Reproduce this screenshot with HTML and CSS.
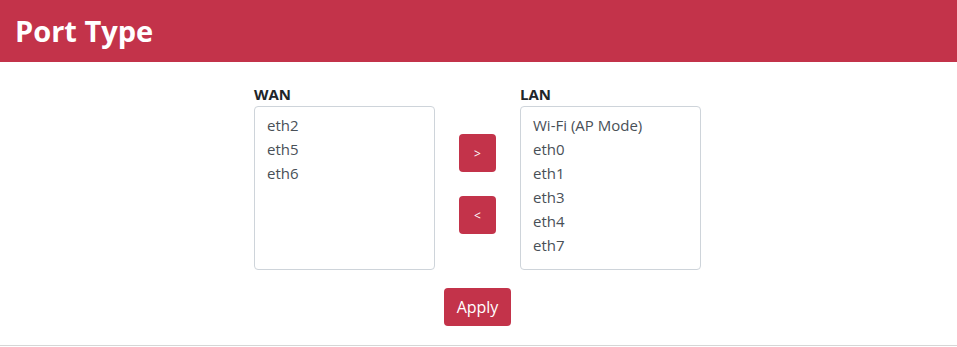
FILE: index.html
```html
<!DOCTYPE html>
<html>
<head>
  <meta charset="UTF-8">
  <link rel="stylesheet" href="styles.css">
</head>
<body>
  <div class="header">
    <h1>Port Type</h1>
  </div>

  <div class="content">
    <div class="port-row">
      <div class="port-group">
        <label for="wanList">WAN</label>
        <select id="wanList" class="port-list" multiple>
          <option>eth2</option>
          <option>eth5</option>
          <option>eth6</option>
        </select>
      </div>

      <div class="move-buttons">
        <button class="move-btn" id="toLan">&gt;</button>
        <button class="move-btn" id="toWan">&lt;</button>
      </div>

      <div class="port-group">
        <label for="lanList">LAN</label>
        <select id="lanList" class="port-list" multiple>
          <option>Wi-Fi (AP Mode)</option>
          <option>eth0</option>
          <option>eth1</option>
          <option>eth3</option>
          <option>eth4</option>
          <option>eth7</option>
        </select>
      </div>
    </div>

    <div class="actions">
      <button class="apply-btn" id="apply">Apply</button>
    </div>
  </div>
</body>
</html>
```

FILE: styles.css
```css
body {
  margin: 0;
  font-family: 'Open Sans', 'Noto Sans', sans-serif;
  background: white;
  color: #212529;
}
.header {
  background: #c3334a;
  height: 62px;
  display: flex;
  align-items: center;
  padding: 0 15px;
}
.header h1 {
  margin: 0;
  color: white;
  font-size: 29px;
  font-weight: 700;
  padding-bottom: 2px;
}
.content {
  height: 284px;
  border-bottom: 1px solid #d6d6d6;
  padding-top: 22px;
  box-sizing: border-box;
}
.port-row {
  display: flex;
  justify-content: center;
  gap: 24px;
  padding-right: 2px;
}
.port-group {
  display: flex;
  flex-direction: column;
}
.port-group label {
  font-size: 15px;
  font-weight: 700;
  line-height: 20px;
  margin-bottom: 2px;
}
.port-list {
  width: 181px;
  height: 164px;
  padding: 8px 12px 6px;
  border: 1px solid #ced4da;
  border-radius: 4px;
  font-family: inherit;
  font-size: 15px;
  color: #495057;
  box-sizing: border-box;
  overflow: hidden;
  outline: none;
}
.port-list option {
  padding: 0;
  line-height: 24px;
  height: 24px;
}
.move-buttons {
  display: flex;
  flex-direction: column;
  gap: 24px;
  margin-top: 50px;
}
.move-btn {
  width: 37px;
  height: 38px;
  border: none;
  border-radius: 4px;
  background: #c3334a;
  color: white;
  font-family: inherit;
  font-size: 12px;
  padding: 0;
  cursor: pointer;
}
.actions {
  display: flex;
  justify-content: center;
  margin-top: 18px;
  padding-right: 2px;
}
.apply-btn {
  width: 67px;
  height: 38px;
  border: none;
  border-radius: 4px;
  background: #c3334a;
  color: white;
  font-family: inherit;
  font-size: 16px;
  padding: 0;
  cursor: pointer;
}
```
